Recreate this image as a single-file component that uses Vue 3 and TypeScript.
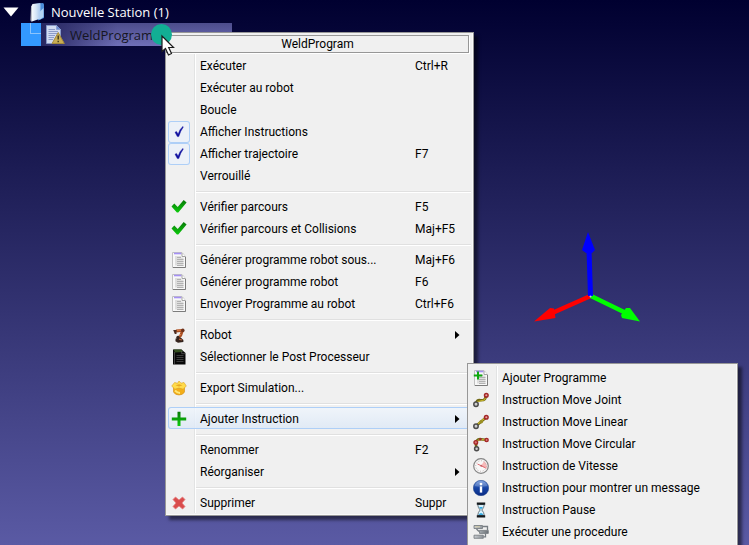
<script setup lang="ts">
import { ref } from 'vue'

interface Entry {
  label?: string
  icon?: string
  keys?: string
  sub?: boolean
  checked?: boolean
  active?: boolean
  separator?: boolean
}

const expanded = ref(true)

const mainMenu = ref<Entry[]>([
  { label: 'Exécuter', keys: 'Ctrl+R' },
  { label: 'Exécuter au robot' },
  { label: 'Boucle' },
  { label: 'Afficher Instructions', icon: 'tick', checked: true },
  { label: 'Afficher trajectoire', icon: 'tick', checked: true, keys: 'F7' },
  { label: 'Verrouillé' },
  { separator: true },
  { label: 'Vérifier parcours', icon: 'valid', keys: 'F5' },
  { label: 'Vérifier parcours et Collisions', icon: 'valid', keys: 'Maj+F5' },
  { separator: true },
  { label: 'Générer programme robot sous...', icon: 'doc', keys: 'Maj+F6' },
  { label: 'Générer programme robot', icon: 'doc', keys: 'F6' },
  { label: 'Envoyer Programme au robot', icon: 'doc', keys: 'Ctrl+F6' },
  { separator: true },
  { label: 'Robot', icon: 'robot', sub: true },
  { label: 'Sélectionner le Post Processeur', icon: 'post' },
  { separator: true },
  { label: 'Export Simulation...', icon: 'box' },
  { separator: true },
  { label: 'Ajouter Instruction', icon: 'plus', sub: true, active: true },
  { separator: true },
  { label: 'Renommer', keys: 'F2' },
  { label: 'Réorganiser', sub: true },
  { separator: true },
  { label: 'Supprimer', icon: 'cross', keys: 'Suppr' },
])

const subMenu = ref<Entry[]>([
  { label: 'Ajouter Programme', icon: 'docplus' },
  { label: 'Instruction Move Joint', icon: 'joint' },
  { label: 'Instruction Move Linear', icon: 'linear' },
  { label: 'Instruction Move Circular', icon: 'circular' },
  { label: 'Instruction de Vitesse', icon: 'speed' },
  { label: 'Instruction pour montrer un message', icon: 'info' },
  { label: 'Instruction Pause', icon: 'pause' },
  { label: 'Exécuter une procedure', icon: 'proc' },
])

const menus = [
  { id: 'main', title: 'WeldProgram', entries: mainMenu },
  { id: 'sub', title: '', entries: subMenu },
]
</script>

<template>
  <main class="viewport">
    <svg width="0" height="0" class="defs" aria-hidden="true">
      <defs>
        <linearGradient id="gGreen" x1="0" y1="0" x2="0" y2="1"><stop offset="0" stop-color="#087808" /><stop offset="1" stop-color="#0ccc0c" /></linearGradient>
        <linearGradient id="gInfo" x1="0" y1="0" x2="0" y2="1"><stop offset="0" stop-color="#6f96dc" /><stop offset=".5" stop-color="#1644a4" /><stop offset="1" stop-color="#0a2c86" /></linearGradient>
        <linearGradient id="gFolder" x1="0" y1="0" x2="1" y2="0"><stop offset="0" stop-color="#ffffff" /><stop offset=".55" stop-color="#d6e6f6" /><stop offset="1" stop-color="#a4c6ee" /></linearGradient>
        <linearGradient id="gGray" x1="0" y1="0" x2="1" y2="0"><stop offset="0" stop-color="#c8ccd0" /><stop offset="1" stop-color="#6c7278" /></linearGradient>

        <symbol id="i-tick" viewBox="0 0 16 16"><path d="M4 8.2 L5.5 7.4 L7.1 10 Q8.8 5 11.8 2.4 L12.4 3 Q9.2 7.2 7.8 12.6 L6.3 12.6 Z" fill="#1212a0" stroke="#1212a0" stroke-width=".4" /></symbol>
        <symbol id="i-valid" viewBox="0 0 16 16"><path d="M.5 7.5 L3.3 4.5 L6.7 8 L12.7 1 L15.6 3.5 L7.3 13.6 L5.9 13.6 Z" fill="url(#gGreen)" /></symbol>
        <symbol id="i-doc" viewBox="0 0 16 16">
          <path d="M1.5 .5 H11 L14.5 4.500 V15.500 H1.500 Z" fill="#f8f8f8" stroke="#c0c0c0" />
          <path d="M3 1.500 H10.500" stroke="#a48ff4" stroke-width="1.600" />
          <path d="M11 1 V4.500 H14.500" fill="#fff" stroke="#a4a4a4" />
          <path d="M4 4 H10 V5.500 H12.500 V13.500 H4 Z" fill="#dedede" />
          <path d="M6 5.500 H10 M6 7.500 H12.500 M6 9.500 H12.500 M6 11.500 H12.500 M6 13.500 H12.500" stroke="#b2b2b2" />
          <path d="M14.500 5 V15.500 H2" fill="none" stroke="#7c7c7c" />
        </symbol>
        <symbol id="i-docplus" viewBox="0 0 16 16">
          <use href="#i-doc" /><path d="M5 1.500 V9.500 M.8 5.500 H9.200" stroke="#10a810" stroke-width="2" />
        </symbol>
        <symbol id="i-robot" viewBox="0 0 16 16">
          <path d="M5 4 L11.5 3.4 L9.8 8.4 L7 11.5" fill="none" stroke="#a94e22" stroke-width="2.8" stroke-linejoin="round" />
          <path d="M6 3.5 L11 3 M10 7 L7.5 10" stroke="#df7d45" stroke-width="1" />
          <path d="M2.2 3 H5.5 V7 H3.8 Z" fill="#4e2d20" /><circle cx="11.8" cy="3.4" r="1.8" fill="#6d321c" />
          <circle cx="7" cy="10.5" r="1.7" fill="#38251e" /><path d="M4.6 11.6 L10 10.7 L12.4 13 V15 L7 15.7 L4.4 14.2 Z" fill="#34231d" /><path d="M8 12.2 L11 13" stroke="#ba6239" stroke-width="1.2" />
        </symbol>
        <symbol id="i-post" viewBox="0 0 16 16">
          <path d="M2 .5 H10.500 L14.500 4 V15.500 H2 Z" fill="#080808" /><path d="M2.500 .5 H10.500 L12 3 L4 3.600 Z" fill="#345020" />
          <path d="M5.500 6.500 H12.500 M5.500 8.500 H12.500 M5.500 10.500 H12.500 M5.500 12.500 H12.500" stroke="#3c3c3c" /><path d="M3.500 3 V15 M10.700 2 V4.700 H14" fill="none" stroke="#606060" stroke-width=".700" />
        </symbol>
        <symbol id="i-box" viewBox="0 0 16 16">
          <path d="M2.5 6 L8 8.5 L13.5 6 V12 Q12 15 8 15 Q4 15 2.5 12 Z" fill="#f3ae18" stroke="#d08b12" stroke-width=".6" />
          <path d="M.7 6 L3.6 2.5 L6.5 3.3 L8 1 L10 3.2 L13 2.5 L15.3 6 L12.2 9.2 L8 8 L3.8 9.2 Z" fill="#ffdc4c" stroke="#dca020" stroke-width=".6" />
          <path d="M4.500 5.2 L8 4.300 L11.500 5.2 L8 6.400 Z" fill="#e7a824" /><path d="M4 10.5 Q6.5 13 9 13" fill="none" stroke="#ffe878" stroke-width="1.800" />
        </symbol>
        <symbol id="i-plus" viewBox="0 0 16 16"><path d="M6.500 .8 H9.500 V6.500 H15.200 V9.500 H9.500 V15 H6.500 V9.500 H.8 V6.500 H6.500 Z" fill="url(#gGreen)" /></symbol>
        <symbol id="i-cross" viewBox="0 0 16 16"><path d="M2 4.5 L4.5 2 L8 5 L11.5 2 L14 4.5 L11 8 L14 11.6 L11.6 14 L8 11 L4.5 14 L2 11.5 L5 8 Z" fill="#d94c4c" stroke="#e58080" stroke-width=".8" /></symbol>
        <symbol id="i-joint" viewBox="0 0 16 16">
          <path d="M3 11.500 Q4 7.500 7.5 8.200 L10.5 8 Q12.5 7.3 13 3.5" fill="none" stroke="#716814" stroke-width="2.6" /><path d="M4 9.8 L11 8 L12.5 6" fill="none" stroke="#c6b52a" stroke-width="1.1" />
          <circle cx="3" cy="12.2" r="2.2" fill="#cfcfcf" stroke="#4c4c4c" stroke-width="1.5" /><circle cx="13.3" cy="3.3" r="1.8" fill="#e7a3a3" stroke="#a32828" stroke-width="1.5" />
        </symbol>
        <symbol id="i-linear" viewBox="0 0 16 16">
          <path d="M3 12 L13 3.5" stroke="#716814" stroke-width="2.5" /><path d="M5 9.8 L11.5 4.5" stroke="#cebb2d" stroke-width="1.2" /><circle cx="8.2" cy="7.7" r="1.8" fill="#9a8f22" />
          <circle cx="3" cy="12.2" r="2.2" fill="#cfcfcf" stroke="#4c4c4c" stroke-width="1.5" /><circle cx="13.3" cy="3.3" r="1.8" fill="#e7a3a3" stroke="#a32828" stroke-width="1.5" />
        </symbol>
        <symbol id="i-circular" viewBox="0 0 16 16">
          <path d="M3.3 12.5 L2.8 6 Q5 2.8 8 3.2 L13.5 4" fill="none" stroke="#716814" stroke-width="2.6" /><path d="M3.5 6 Q5 3.6 8 3.5 L12 4" fill="none" stroke="#d4c13a" />
          <circle cx="3.6" cy="12.8" r="2" fill="#cfcfcf" stroke="#4c4c4c" stroke-width="1.5" /><circle cx="2.8" cy="6.4" r="1.8" fill="#dc7777" stroke="#a32828" stroke-width="1.4" /><circle cx="7.400" cy="3.200" r="1.200" fill="#a32828" /><circle cx="13.6" cy="4" r="1.6" fill="#dc7777" stroke="#a32828" stroke-width="1.4" />
        </symbol>
        <symbol id="i-speed" viewBox="0 0 16 16">
          <circle cx="8" cy="8" r="7.300" fill="#f8f8f8" stroke="#858585" stroke-width="1.200" /><path d="M8 8 L11 3.300 Q15 6 13.500 11 Z" fill="#f7b9b9" />
          <circle cx="8" cy="8" r="5.300" fill="none" stroke="#c0b0b0" stroke-width="1" stroke-dasharray="1 1.700" /><path d="M4.500 6 L12.500 9.800" stroke="#e0686e" stroke-width="1" /><circle cx="8.200" cy="7.700" r="1" fill="#c8666b" />
        </symbol>
        <symbol id="i-info" viewBox="0 0 16 16">
          <circle cx="8" cy="8" r="7.7" fill="url(#gInfo)" stroke="#173a82" stroke-width=".5" /><path d="M1.5 6 Q3 1.2 8 1 Q13 1.2 14.5 6 Q8 7.5 1.5 6" fill="#fff" opacity=".2" />
          <circle cx="8" cy="4.1" r="1.4" fill="#fff" /><path d="M6.8 6.4 H9.2 V12.6 H6.8 Z" fill="#fff" />
        </symbol>
        <symbol id="i-pause" viewBox="0 0 16 16">
          <path d="M4.7 2.5 H11.3 Q11 6 8.8 8 Q11 10 11.3 13.5 H4.7 Q5 10 7.2 8 Q5 6 4.7 2.5" fill="#d7f0fb" stroke="#697a84" />
          <path d="M6 5 H10 L8 7.4 Z M5.5 13 Q8 9.2 10.5 13 Z" fill="#36a9df" /><path d="M3.8 1.7 H12.2 M3.8 14.3 H12.2" stroke="#15191c" stroke-width="2.2" />
        </symbol>
        <symbol id="i-proc" viewBox="0 0 16 16">
          <path d="M1 1.5 H9.5 V4.5 H1 Z M6.5 6.4 H15.3 V9.4 H6.5 Z M1 11.2 H10.3 V14.3 H1 Z" fill="url(#gGray)" stroke="#71777c" stroke-width=".8" />
          <path d="M10 2.5 H14.5 V6 M6 7.500 L3.5 5 M12.5 9.5 V12.8 H10.5" fill="none" stroke="#777d82" stroke-width="1.3" /><path d="M2 2.8 H7" stroke="#d7cfac" />
        </symbol>
      </defs>
    </svg>

    <nav class="tree" aria-label="Station">
      <div class="station">
        <button class="twisty" type="button" aria-label="Nouvelle Station" @click="expanded = !expanded">
          <svg width="16" height="10" viewBox="0 0 16 10"><path d="M.5 .5 H15.5 L8 9.5 Z" fill="#fff" /></svg>
        </button>
        <svg class="folder" width="16" height="20" viewBox="0 0 16 20">
          <path d="M5 2 L12.500 1 Q14 1 14 2.500 V16 L8 18.5 Z" fill="#4d8edb" />
          <path d="M1 5 L2.5 2 L10.5 1 V16.5 L2 19.5 Q.5 19.5 .6 18 Z" fill="url(#gFolder)" />
          <path d="M9.500 10 L13.5 6 V15 L9.500 18 Z" fill="#b4d4f4" /><path d="M1.5 5 V19" stroke="#b9bec7" stroke-width="1" />
        </svg>
        <span>Nouvelle Station (1)</span>
      </div>
      <div v-if="expanded" class="program">
        <span class="branch"><i></i></span>
        <button class="node" type="button">
          <svg width="20" height="21" viewBox="0 0 20 21">
            <path d="M1.500 1.5 H11.5 L15.5 5.5 V19.5 H1.500 Z" fill="#d2dcf2" stroke="#8798c8" /><path d="M11.5 1.5 V5.5 H15.5" fill="#6c8cd2" stroke="#8da2d6" />
            <path d="M3.5 5.5 H10 M3.5 7.500 H13 M3.5 9.500 H12 M3.5 11.500 H10 M3.5 13.500 H9 M3.5 15.500 H8" stroke="#8c9cc8" />
            <path d="M13.2 8.5 L19.3 19.5 H7.1 Z" fill="#c9ae53" stroke="#a58b3c" stroke-linejoin="round" /><path d="M13.2 11.5 V15.6 M13.2 16.8 V18.3" stroke="#3c361c" stroke-width="1.4" />
          </svg>
          <span>WeldProgram</span>
        </button>
      </div>
    </nav>

    <svg class="axes" width="108" height="92" viewBox="533 231 108 92" role="img" aria-label="Axes">
      <path d="M590.5 296 L550 314" stroke="#fe0000" stroke-width="4.5" /><path d="M534 321.5 L550 308 L554 308.500 L555.500 318 Z" fill="#fe0000" />
      <path d="M591 296 L626 313" stroke="#00fe00" stroke-width="4.5" /><path d="M640 321.500 L630 308 L626 308 L621 315 L622 318 Z" fill="#00fe00" />
      <path d="M590.500 296 L589 250" stroke="#0000fe" stroke-width="5" /><path d="M588 232 L595 250 L592 253 L586 253 L582 250 Z" fill="#0000fe" />
      <circle cx="590.500" cy="296.500" r="1" fill="#b4b4ff" />
    </svg>

    <section v-for="menu in menus" :key="menu.id" :class="['menu', menu.id]" role="menu">
      <h1 v-if="menu.title" class="title">{{ menu.title }}</h1>
      <div class="entries">
        <template v-for="(e, n) in menu.entries.value" :key="n">
          <hr v-if="e.separator" class="sep" />
          <button v-else type="button" role="menuitem" :class="['entry', { active: e.active }]">
            <span :class="['slot', { checked: e.checked }]">
              <svg v-if="e.icon" width="16" height="16"><use :href="'#i-' + e.icon" /></svg>
            </span>
            <span class="label">{{ e.label }}</span>
            <span class="keys">{{ e.keys }}</span>
            <svg v-if="e.sub" class="arrow" width="5" height="8" viewBox="0 0 5 8"><path d="M0 0 L4.500 4 L0 8 Z" fill="#000" /></svg>
          </button>
        </template>
      </div>
    </section>

    <svg class="pointer" width="26" height="34" viewBox="150 23 26 34" aria-hidden="true">
      <circle cx="161.500" cy="34.500" r="10.500" fill="#12ae94" />
      <path d="M162 36 V51.500 L165.500 48.500 L168.500 55 L171.500 53.500 L168.700 47.500 H173.500 Z" fill="#fff" stroke="#1c1c1c" stroke-width="1.200" />
    </svg>
  </main>
</template>

<style>
body {
  margin: 0;
}
</style>

<style scoped>
.viewport {
  position: relative;
  height: 100vh;
  overflow: hidden;
  background: linear-gradient(#000030, #5a5aa4);
  font: 12px/22px Roboto, "Noto Sans", sans-serif;
  color: #000;
}
.defs {
  position: absolute;
}
button {
  margin: 0;
  padding: 0;
  border: 0;
  background: none;
  font: inherit;
  color: inherit;
  text-align: left;
}
.tree {
  font-family: "Open Sans", "Noto Sans", sans-serif;
  font-size: 13px;
}
.station {
  display: flex;
  align-items: center;
  height: 23px;
  padding-left: 3px;
  color: #fff;
}
.twisty {
  display: flex;
  margin-right: 11px;
}
.folder {
  margin-right: 5px;
}
.program {
  display: flex;
  height: 23px;
  padding-left: 21px;
}
.branch {
  width: 20px;
  background: #3399ff;
}
.branch i {
  display: block;
  box-sizing: border-box;
  height: 11px;
  margin-left: 9px;
  border-left: 1px solid #8cc4fc;
  border-bottom: 1px solid #8cc4fc;
}
.node {
  display: flex;
  align-items: center;
  gap: 5px;
  width: 191px;
  padding-left: 4px;
  background: linear-gradient(90deg, #262660, transparent 40%), linear-gradient(#4c4c8c, #7070b8);
  color: #15151f;
}
.axes {
  position: absolute;
  left: 533px;
  top: 231px;
}
.menu {
  position: absolute;
  box-sizing: border-box;
  border: 1px solid #979797;
  background: #f0f0f0;
  box-shadow: inset -1px -1px #fafafa, 4px 4px 3px rgba(0, 0, 0, 0.5);
}
.main {
  left: 165px;
  top: 32px;
  width: 309px;
  padding: 2px 0 2px;
}
.sub {
  left: 467px;
  top: 363px;
  bottom: -6px;
  width: 271px;
  padding-top: 2px;
}
.title {
  box-sizing: border-box;
  height: 18px;
  margin: 0 4px 1px 0;
  border: 1px solid #979797;
  box-shadow: 1px 1px #fff;
  font: inherit;
  line-height: 17px;
  text-align: center;
}
.entries {
  padding: 0 2px;
  background: linear-gradient(90deg, #e2e3e3 50%, #fff 50%) 28px 0 / 2px 100% no-repeat;
}
.entry {
  box-sizing: border-box;
  display: grid;
  grid-template-columns: 22px 1fr 40px 14px;
  align-items: center;
  width: 100%;
  height: 22px;
}
.entry.active {
  border-radius: 3px;
  background: linear-gradient(rgba(240, 246, 253, 0.8), rgba(220, 232, 246, 0.8));
  box-shadow: inset 0 0 0 1px #aecff7;
}
.slot {
  display: flex;
  align-items: center;
  justify-content: center;
  height: 22px;
}
.slot.checked {
  border-radius: 3px;
  background: #ecf1f8;
  box-shadow: inset 0 0 0 1px #aecff7;
}
.label {
  padding: 1px 0 0 10px;
  white-space: nowrap;
}
.keys {
  padding-top: 1px;
  white-space: nowrap;
}
.sep {
  height: 1px;
  margin: 5px 0 2px 28px;
  border: 0;
  border-top: 1px solid #e0e0e0;
  background: #fff;
}
.main .entry {
  grid-template-columns: 22px 225px 40px 14px;
}
.pointer {
  position: absolute;
  left: 150px;
  top: 23px;
}
</style>
